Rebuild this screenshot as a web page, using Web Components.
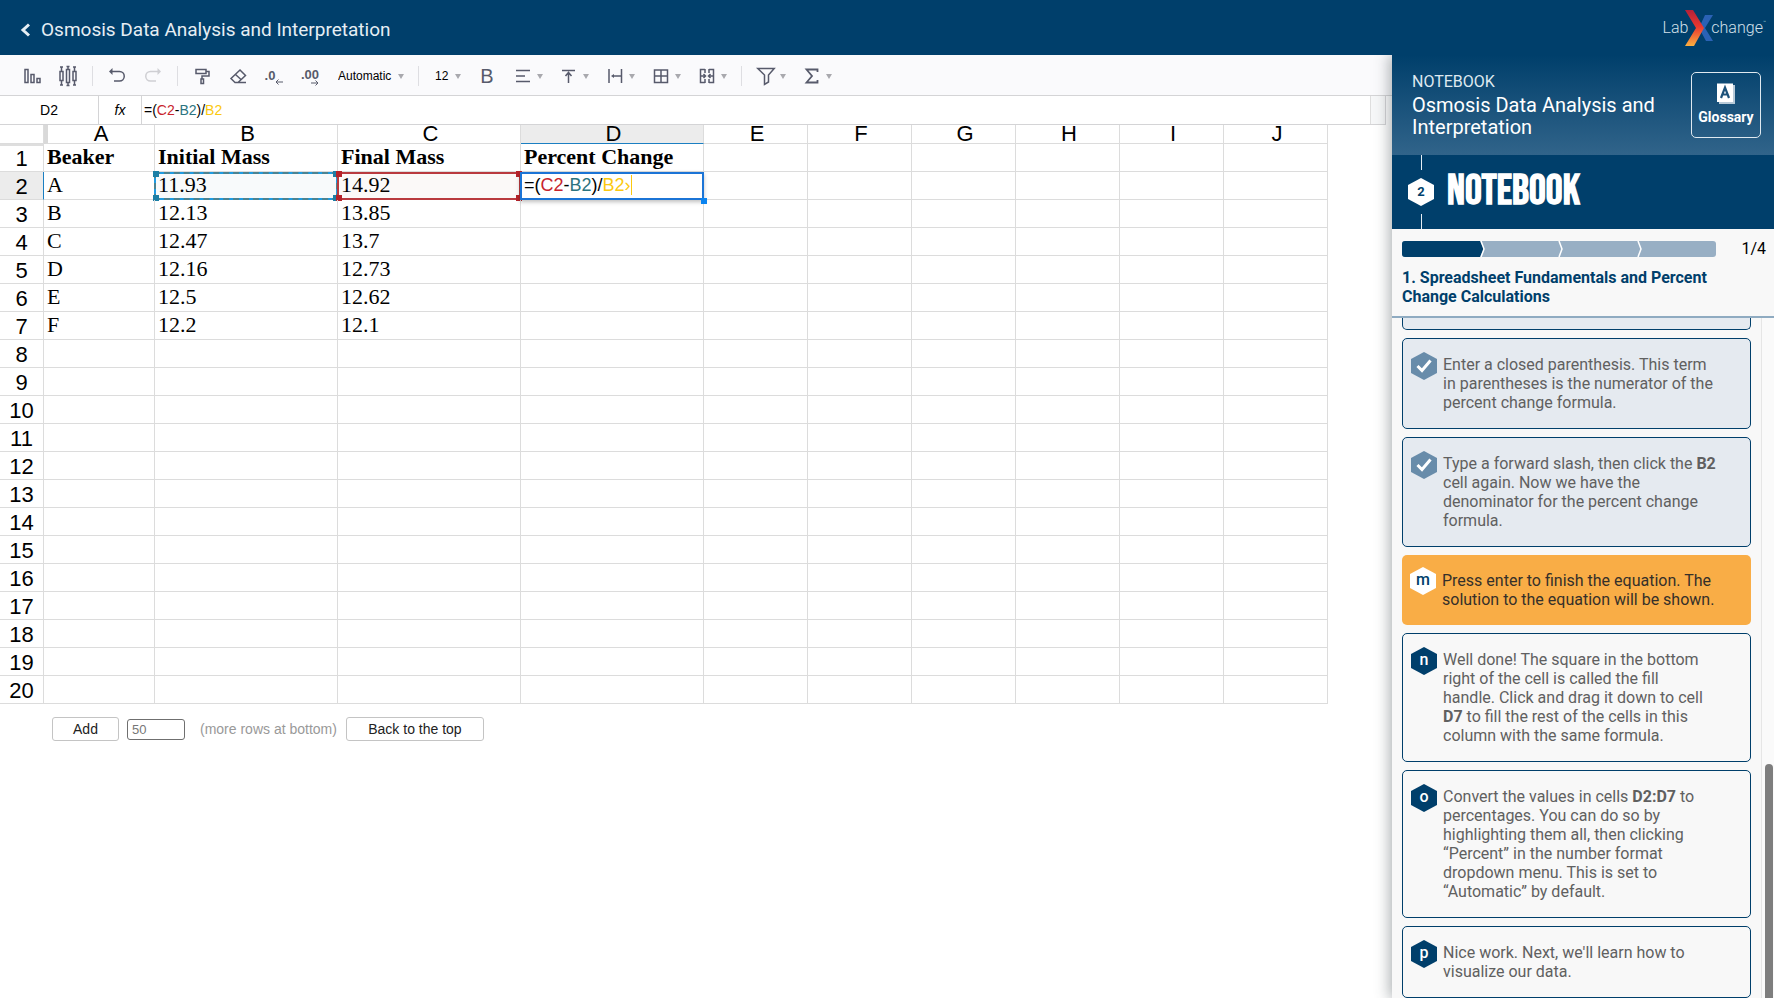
<!DOCTYPE html>
<html lang="en">
<head>
<meta charset="utf-8">
<title>Osmosis Data Analysis and Interpretation</title>
<style>
  html, body { height: 100%; margin: 0; }
  body {
    --navy: #003f6b;
    --line: #dcdcdc;
    --sans: "Liberation Sans", Arial, sans-serif;
    --ui: Roboto, "Open Sans", sans-serif;
    background: #fff;
    font-family: var(--sans);
    overflow: hidden;
  }
</style>
</head>
<body>
<lab-page>
  <lab-header slot="header">Osmosis Data Analysis and Interpretation</lab-header>
  <sheet-toolbar></sheet-toolbar>
  <formula-bar></formula-bar>
  <spread-sheet></spread-sheet>
  <sheet-footer></sheet-footer>
  <notebook-panel slot="panel">
    <step-card state="done" cut></step-card>
    <step-card state="done">Enter a closed parenthesis. This term in parentheses is the numerator of the percent change formula.</step-card>
    <step-card state="done">Type a forward slash, then click the <b>B2</b> cell again. Now we have the denominator for the percent change formula.</step-card>
    <step-card state="current" mark="m">Press enter to finish the equation. The solution to the equation will be shown.</step-card>
    <step-card mark="n">Well done! The square in the bottom right of the cell is called the fill<br>handle. Click and drag it down to cell<br><b>D7</b> to fill the rest of the cells in this<br>column with the same formula.</step-card>
    <step-card mark="o">Convert the values in cells <b>D2:D7</b> to<br>percentages. You can do so by highlighting them all, then clicking “Percent” in the number format dropdown menu. This is set to “Automatic” by default.</step-card>
    <step-card mark="p">Nice work. Next, we'll learn how to visualize our data.</step-card>
  </notebook-panel>
</lab-page>

<script>
// Base: every element clones its own markup and styles into a shadow root
class BaseElement extends HTMLElement {
  constructor() {
    super();
    const t = document.createElement('template');
    t.innerHTML = this.constructor.markup;
    this.attachShadow({ mode: 'open' }).appendChild(t.content.cloneNode(true));
  }
}

// Page frame
class LabPage extends BaseElement {
  static markup = `
    <style>
      :host { display: flex; flex-direction: column; height: 100vh; }
      .body { flex: 1; display: flex; min-height: 0; }
      main { flex: 1; min-width: 0; overflow: hidden; }
    </style>
    <slot name="header"></slot>
    <div class="body">
      <main><slot></slot></main>
      <slot name="panel"></slot>
    </div>`;
}

class LabHeader extends BaseElement {
  static markup = `
    <style>
      :host { display: flex; align-items: center; justify-content: space-between; height: 55px;
              box-sizing: border-box; padding: 0 8px 0 20px; background: var(--navy); color: #e6eef4; }
      a { color: inherit; text-decoration: none; }
      .back { display: flex; align-items: center; gap: 10px; padding-top: 4px; font: 400 19px/24px var(--ui); }
      .logo { display: flex; align-items: center; color: #d3e0ea; font: 300 16px/20px var(--ui); }
      .logo svg { margin: 0 -4px 0 -3px; }
      sup { font-size: 5px; line-height: 5px; align-self: flex-start; padding-top: 11px; }
    </style>
    <a class="back" href="#">
      <svg width="11" height="14" viewBox="0 0 11 14" fill="none" stroke="currentColor" stroke-width="3"><path d="M9 1.500L3 7l6 5.500"/></svg>
      <slot></slot>
    </a>
    <a class="logo" href="#" aria-label="LabXchange">
      <span>Lab</span>
      <svg width="30" height="38" viewBox="0 0 30 38">
        <defs><linearGradient id="g" x1="0" y1="0" x2="0" y2="1">
          <stop offset="0" stop-color="#b3213a"/><stop offset=".45" stop-color="#e8372e"/><stop offset=".6" stop-color="#ee5433"/><stop offset="1" stop-color="#fbb040"/>
        </linearGradient></defs>
        <path d="M20 6h8l-8 13 8 13h-7l-7-13z" fill="#2a62b5"/>
        <path d="M0 1h8l11 18L9 37H0l11-18z" fill="url(#g)"/>
      </svg>
      <span>change</span><sup>™</sup>
    </a>`;
}

const ICONS = {
  bars: '<path d="M2 2.500h3v13H2zM8 7.500h3v8H8zM14 11.500h3v4h-3z"/>',
  box: '<path d="M1 4.500h3v9H1zM7.500 2.500h3v13h-3zM14 4.500h3v9h-3zM2.500 0v4M2.500 14v4M9 0v2M9 16v2M15.500 0v4M15.500 14v4M1 0h3M1 18h3M7.500-.5h3M7.500 18.500h3M14 0h3M14 18h3"/>',
  undo: '<path d="M3 4.500h8.500a4.500 4.500 0 0 1 0 9.500H6"/><path d="M1 4.500L4.500 1v7z" fill="currentColor" stroke="none"/>',
  redo: '<path d="M15 4.500H6.500a4.500 4.500 0 0 0 0 9.500H12"/><path d="M17 4.500L13.500 1v7z" fill="currentColor" stroke="none"/>',
  paint: '<path d="M3 2.500h10v4H3zM13 4.500h3v4.500H9v3M8 12h2.500v4.500H8z"/>',
  erase: '<path d="M6 15.500L2 11.500l9-8.500 5.500 5.500L9 15.500zM6.500 7.500l5.500 5M6 15.500h11"/>',
  align: '<path d="M2 3.500h14M2 9h9M2 14.500h14"/>',
  top: '<path d="M2 3.500h13M8.500 16V6M5.500 9l3-3.500 3 3.500"/>',
  wrap: '<path d="M3 2v14M15.500 2v14M7 9h8"/><path d="M5 9l3-2v4z" fill="currentColor" stroke="none"/>',
  grid: '<path d="M2.500 3h13v12.500h-13zM9 3v12.500M2.500 9h13"/>',
  merge: '<path d="M7 2.500H2.500v13H7M11 2.500h4.500v13H11M7 2v4M11 2v4M7 12v4M11 12v4M3 9h4M15 9h-4M5.500 7l2 2-2 2M12.500 7l-2 2 2 2"/>',
  filter: '<path d="M.8 1.500h16.400l-5.700 6.500v7l-4 2.500V8z"/>',
  sum: '<path d="M14.500 5V2.500H3.500L9 9l-5.500 6.500h11V13" stroke-width="1.800"/>'
};

const svgIcon = name =>
  `<svg width="18" height="18" viewBox="0 0 18 18" fill="none" stroke="currentColor" stroke-width="1.500" overflow="visible">${ICONS[name]}</svg>`;
const caret = '<svg class="caret" width="6" height="5" viewBox="0 0 6 5" fill="#a9a9ae"><path d="M0 0h6L3 5z"/></svg>';

class SheetToolbar extends BaseElement {
  static markup = `
    <style>
      :host { display: flex; align-items: center; height: 41px; box-sizing: border-box; padding: 2px 0 0 14px;
              background: #fafafc; border-bottom: 1px solid #d4d4d6; color: #575a6b; }
      button { display: flex; align-items: center; justify-content: center; width: 36px; height: 30px;
               padding: 0; border: 0; background: none; color: inherit; flex: none; }
      button.menu { width: 46px; gap: 5px; }
      button:disabled { color: #cfcfd3; }
      hr { width: 1px; height: 20px; margin: 0 6px; border: 0; background: #dedee2; flex: none; }
      .pick { display: flex; align-items: center; gap: 6px; height: 30px; padding: 0 8px 0 10px; color: #000; }
      select { appearance: none; border: 0; padding: 0; margin: 0; background: none; color: inherit; font: 12px/16px var(--sans); }
      .dec { display: flex; align-items: flex-start; font: bold 13px/16px var(--sans); }
      .dec.two { flex-direction: column; align-items: flex-end; }
      .dec.one svg { margin-top: 11px; }
      .dec.two svg { margin-top: -3px; }
      .bold { font: 20px/24px var(--sans); }
      .caret { flex: none; }
    </style>
    <button aria-label="Bar chart">${svgIcon('bars')}</button>
    <button aria-label="Box plot">${svgIcon('box')}</button>
    <hr>
    <button aria-label="Undo">${svgIcon('undo')}</button>
    <button aria-label="Redo" disabled>${svgIcon('redo')}</button>
    <hr>
    <button aria-label="Paint format">${svgIcon('paint')}</button>
    <button aria-label="Clear format">${svgIcon('erase')}</button>
    <button aria-label="Decrease decimals"><span class="dec one">.0<svg width="8" height="6" viewBox="0 0 8 6" stroke="currentColor" fill="none"><path d="M8 3H1M3.500.5L1 3l2.500 2.500"/></svg></span></button>
    <button aria-label="Increase decimals"><span class="dec two">.00<svg width="8" height="6" viewBox="0 0 8 6" stroke="currentColor" fill="none"><path d="M0 3h7M4.500.5L7 3 4.500 5.500"/></svg></span></button>
    <label class="pick"><select aria-label="Number format"><option>Automatic</option></select>${caret}</label>
    <hr>
    <label class="pick"><select aria-label="Font size"><option>12</option></select>${caret}</label>
    <button class="bold" aria-label="Bold">B</button>
    <button class="menu" aria-label="Horizontal align">${svgIcon('align')}${caret}</button>
    <button class="menu" aria-label="Vertical align">${svgIcon('top')}${caret}</button>
    <button class="menu" aria-label="Text wrap">${svgIcon('wrap')}${caret}</button>
    <button class="menu" aria-label="Borders">${svgIcon('grid')}${caret}</button>
    <button class="menu" aria-label="Merge cells">${svgIcon('merge')}${caret}</button>
    <hr>
    <button class="menu" aria-label="Filter">${svgIcon('filter')}${caret}</button>
    <button class="menu" aria-label="Functions">${svgIcon('sum')}${caret}</button>`;
}

// Colours of the references inside a formula
const formula = '=(<i class="c">C2</i>-<i class="b">B2</i>)/<i class="y">B2</i>';
const formulaStyle = 'i { font-style: normal; } .c { color: #c8232c; } .b { color: #2b7480; } .y { color: #fbc90f; }';

class FormulaBar extends BaseElement {
  static markup = `
    <style>
      :host { display: flex; height: 29px; box-sizing: border-box; margin-right: 6px;
              border: solid #d4d4d6; border-width: 0 1px 1px 0; font: 14px/28px var(--sans); }
      .name { width: 99px; box-sizing: border-box; text-align: center; border-right: 1px solid #d4d4d6; }
      .fx { width: 43px; box-sizing: border-box; text-align: center; border-right: 1px solid #d4d4d6; font-style: italic; }
      .edit { flex: 1; padding-left: 2px; border-right: 1px solid #dedede; outline: 0; }
      .end { width: 14px; background: #f6f7f8; }
      ${formulaStyle}
    </style>
    <div class="name">D2</div>
    <div class="fx">fx</div>
    <div class="edit" role="textbox" aria-label="Formula" contenteditable>${formula}</div>
    <div class="end"></div>`;
}

class SpreadSheet extends BaseElement {
  static markup = `
    <style>
      :host { display: block; }
      table { border-collapse: separate; border-spacing: 0; table-layout: fixed; width: 1328px; }
      th, td { box-sizing: border-box; padding: 0; border: solid var(--line); border-width: 0 1px 1px 0; }
      th { font: 22px/18px var(--sans); }
      thead th { height: 19px; padding-left: 3px; }
      tbody th { height: 28px; padding-top: 2px; line-height: 25px; }
      td { position: relative; padding-left: 3px; vertical-align: top; text-align: left;
           font: 22px/25px "Liberation Serif", "Times New Roman", serif; white-space: nowrap; }
      td.title { font-weight: bold; }
      thead th:nth-child(2) { padding: 0; border-left: 4px solid #d9d9d9; }
      tbody tr:first-child th { box-shadow: inset 0 2px #dedede; }
      thead th.on { background: #ececec; border-bottom-color: #1b7fc2; }
      tbody th.on { background: #ececec; border-right-color: #1b7fc2; }
      .range { position: absolute; inset: 0 -1px -1px -1px; border: 2px solid; pointer-events: none; }
      .range::after { content: ""; position: absolute; inset: -3px;
        background: linear-gradient(currentColor, currentColor) 0 0, linear-gradient(currentColor, currentColor) 100% 0,
                    linear-gradient(currentColor, currentColor) 0 100%, linear-gradient(currentColor, currentColor) 100% 100%;
        background-size: 6px 6px; background-repeat: no-repeat; }
      .blue { color: #1c7fa6; border-color: #1e9be2; background: rgba(40, 90, 130, .03); }
      .blue::before { content: ""; position: absolute; inset: -2px; border: 2px dashed #4d8390; }
      .red { color: #b5232b; border-color: #b93a3f; background: rgba(140, 50, 30, .03); }
      .editor { position: absolute; inset: 0 -1px -1px -1px; z-index: 1; display: flex; align-items: center;
                padding: 0 0 3px 2px; border: 2px solid #1b74d6; background: #fff; box-shadow: 0 2px 4px rgba(0, 0, 0, .25);
                font: 18px/20px var(--sans); outline: 0; }
      .editor::after { content: ""; width: 1px; height: 20px; background: #fbc90f; }
      .handle { position: absolute; right: -4px; bottom: -5px; z-index: 2; width: 6px; height: 6px; background: #0a84f0; }
      ${formulaStyle}
    </style>
    <table>
      <colgroup><col style="width:44px"><col style="width:111px"><col style="width:183px"><col style="width:183px"><col style="width:183px"><col span="6" style="width:104px"></colgroup>
      <thead></thead>
      <tbody></tbody>
    </table>`;

  connectedCallback() {
    const cols = [...'ABCDEFGHIJ'];
    const data = [
      ['Beaker', 'Initial Mass', 'Final Mass', 'Percent Change'],
      ['A', '11.93', '14.92'],
      ['B', '12.13', '13.85'],
      ['C', '12.47', '13.7'],
      ['D', '12.16', '12.73'],
      ['E', '12.5', '12.62'],
      ['F', '12.2', '12.1']
    ];
    const extras = {
      B2: '<div class="range blue"></div>',
      C2: '<div class="range red"></div>',
      D2: `<div class="editor" role="textbox" aria-label="D2" contenteditable><span>${formula}<i class="y">›</i></span></div><div class="handle"></div>`
    };

    this.shadowRoot.querySelector('thead').innerHTML =
      '<tr><th></th>' + cols.map(c => `<th scope="col"${c === 'D' ? ' class="on"' : ''}>${c}</th>`).join('') + '</tr>';

    let rows = '';
    for (let r = 1; r <= 20; r++) {
      rows += `<tr><th scope="row"${r === 2 ? ' class="on"' : ''}>${r}</th>`;
      cols.forEach((c, i) => {
        const text = (data[r - 1] && data[r - 1][i]) || '';
        rows += `<td${r === 1 ? ' class="title"' : ''}>${text}${extras[c + r] || ''}</td>`;
      });
      rows += '</tr>';
    }
    this.shadowRoot.querySelector('tbody').innerHTML = rows;
  }
}

class SheetFooter extends BaseElement {
  static markup = `
    <style>
      :host { display: flex; align-items: center; padding: 13px 0 0 52px; font: 14px/20px var(--sans); color: #999; }
      button, input { box-sizing: border-box; font: inherit; border-radius: 3px; background: #fff; }
      button { height: 24px; padding: 0; border: 1px solid #c4c4c4; color: #222; }
      .add { width: 67px; }
      .top { width: 138px; }
      input { width: 58px; height: 21px; margin: 0 15px 0 8px; padding: 0 4px; border: 1px solid #6f6f6f; color: #777; font-size: 13px; }
      label { margin-right: 9px; }
    </style>
    <button class="add">Add</button>
    <input id="n" value="50">
    <label for="n">(more rows at bottom)</label>
    <button class="top">Back to the top</button>`;
}

class NotebookPanel extends BaseElement {
  static markup = `
    <style>
      :host { position: relative; z-index: 3; display: flex; flex-direction: column; width: 382px; flex: none;
              background: #f8f8f8; font-family: var(--ui); box-shadow: -1px 0 14px 1px rgba(60, 70, 76, .45); clip-path: inset(0 0 0 -24px); }
      header { display: flex; justify-content: space-between; align-items: flex-start; height: 100px; box-sizing: border-box;
               padding: 16px 13px 0 20px; color: #fff; background: linear-gradient(var(--navy), #31648a); }
      header p { margin: 0; font: 400 16px/22px var(--ui); color: #dfe9f0; }
      header h2 { margin: 1px 0 0; font: 400 20px/22px var(--ui); }
      header button { display: flex; flex-direction: column; align-items: center; gap: 3px; width: 70px; height: 66px; margin-top: 1px; padding: 10px 0 0;
                      box-sizing: border-box; border: 1px solid #dfe9f0; border-radius: 5px; background: none; color: #fff; font: bold 14px/18px var(--ui); }
      .stage { display: flex; align-items: stretch; gap: 13px; height: 74px; padding-left: 16px; background: var(--navy); color: #fff; }
      .rail { display: flex; flex-direction: column; align-items: center; justify-content: space-between; width: 26px; }
      .rail::before, .rail::after { content: ""; width: 1px; height: 15px; background: #e6eef4; }
      h1 { margin: 0; font: bold 42px/74px "Bebas Neue", "Roboto Condensed", sans-serif; }
      .progress { padding: 12px 8px 10px 10px; border-bottom: 2px solid #8fabc1; background: #f8f8f8; }
      .row { display: flex; align-items: center; justify-content: space-between; font: 16px/16px var(--ui); }
      .bar { display: flex; width: 314px; height: 16px; border-radius: 3px; overflow: hidden; background: #98afc4; }
      .bar svg { width: 100%; height: 100%; }
      h3 { margin: 11px 0 0; width: 320px; font: bold 16px/19px var(--ui); color: var(--navy); }
      .list { flex: 1; display: flex; min-height: 0; overflow: hidden; }
      .cards { flex: 1; display: flex; flex-direction: column; gap: 8px; padding: 0 10px; }
      .track { width: 13px; box-sizing: border-box; padding: 446px 1px 0 3px; border-left: 1px solid #e6e6e6; background: #fafafa; }
      .thumb { height: 100%; border-radius: 4px 4px 0 0; background: #7e7e7e; }
    </style>
    <header>
      <div>
        <p>NOTEBOOK</p>
        <h2>Osmosis Data Analysis and<br>Interpretation</h2>
      </div>
      <button>
        <svg width="20" height="22" viewBox="0 0 20 22"><path d="M3 2h16v19H3z" fill="#b8cad8"/><path d="M1 .5h16v18.500H1z" fill="#fff"/><path d="M5 15L9 4.500 13 15M6.500 11.500h5" fill="none" stroke="#1d527a" stroke-width="2.200"/></svg>
        Glossary
      </button>
    </header>
    <div class="stage">
      <div class="rail"><hex-badge tone="light" small>2</hex-badge></div>
      <h1>NOTEBOOK</h1>
    </div>
    <div class="progress">
      <div class="row">
        <div class="bar"><svg viewBox="0 0 314 16" preserveAspectRatio="none">
          <path d="M0 0h78l4 8-4 8H0z" fill="#003f6b"/>
          <path d="M79 0l3 8-3 8M157 0l3 8-3 8M236 0l3 8-3 8" fill="none" stroke="#fff" stroke-width="1.500"/>
        </svg></div>
        <span>1/4</span>
      </div>
      <h3>1. Spreadsheet Fundamentals and Percent Change Calculations</h3>
    </div>
    <div class="list">
      <div class="cards"><slot></slot></div>
      <div class="track"><div class="thumb"></div></div>
    </div>`;
}

class HexBadge extends BaseElement {
  static markup = `
    <style>
      :host { display: grid; flex: none; width: 26px; height: 28px; color: #fff; font: 500 16px/28px var(--ui); text-align: center; }
      :host([tone="light"]) { color: var(--navy); }
      :host([small]) { font-size: 13px; font-weight: bold; }
      svg, span { grid-area: 1 / 1; }
      path { fill: var(--navy); }
      :host([tone="light"]) path { fill: #fff; }
      :host([tone="muted"]) path { fill: #688caa; }
      span { line-height: 26px; }
      :host([small]) span { line-height: 28px; }
    </style>
    <svg width="26" height="28" viewBox="0 0 26 28"><path d="M13 0l13 7v14l-13 7-13-7V7z"/></svg>
    <span><slot></slot></span>`;
}

class StepCard extends BaseElement {
  static markup = `
    <style>
      :host { display: flex; align-items: flex-start; gap: 6px; flex: none; box-sizing: border-box;
              padding: 13px 30px 0 8px; border: 1px solid var(--navy); border-radius: 5px;
              color: #606060; font: 400 16px/19px var(--ui); }
      :host([state="done"]) { background: #e5eaf0; }
      :host([state="current"]) { border: 0; padding-top: 12px; background: #f9ad46; color: #35302a; }
      p { margin: 0; padding: 3px 0 16px; }
      :host([state="current"]) p { padding: 4px 0 16px; }
      /* only the bottom edge of a card that has scrolled away */
      :host([cut]) { height: 12px; padding: 0; border-top: 0; border-radius: 0 0 5px 5px; }
      :host([cut]) hex-badge, :host([cut]) p { display: none; }
    </style>
    <hex-badge></hex-badge>
    <p><slot></slot></p>`;

  connectedCallback() {
    const badge = this.shadowRoot.querySelector('hex-badge');
    const state = this.getAttribute('state');
    if (state === 'done') {
      badge.setAttribute('tone', 'muted');
      badge.innerHTML = '<svg width="26" height="26" viewBox="0 0 26 26" fill="none" stroke="#fff" stroke-width="3"><path d="M6.500 14l4.500 4.500 8.500-10"/></svg>';
    } else {
      if (state === 'current') badge.setAttribute('tone', 'light');
      badge.textContent = this.getAttribute('mark');
    }
  }
}

customElements.define('lab-page', LabPage);
customElements.define('lab-header', LabHeader);
customElements.define('sheet-toolbar', SheetToolbar);
customElements.define('formula-bar', FormulaBar);
customElements.define('spread-sheet', SpreadSheet);
customElements.define('sheet-footer', SheetFooter);
customElements.define('notebook-panel', NotebookPanel);
customElements.define('hex-badge', HexBadge);
customElements.define('step-card', StepCard);
</script>
</body>
</html>
